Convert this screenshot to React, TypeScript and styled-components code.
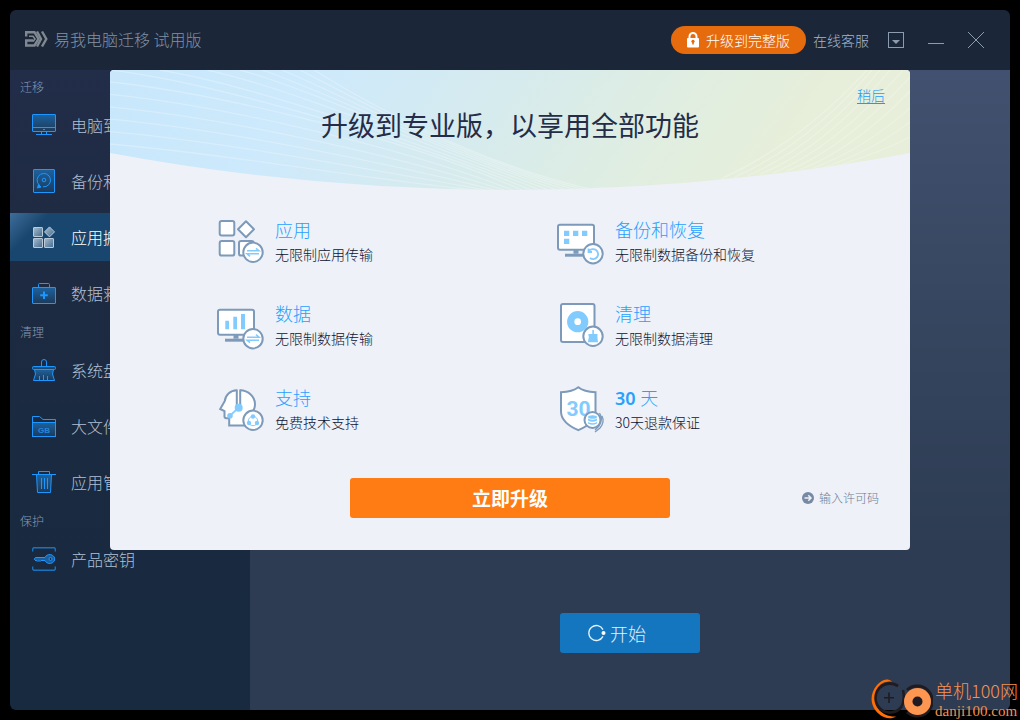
import React, { useId } from "react";
import styled, { createGlobalStyle } from "styled-components";

const GlobalStyle = createGlobalStyle`
  *, *::before, *::after { box-sizing: border-box; }
  body {
    margin: 0;
    background: #000;
    font-family: "Noto Sans CJK SC", "Noto Sans", sans-serif;
    font-weight: 300;
  }
  button { font: inherit; border: 0; cursor: pointer; }
  h1, h2, h3, p, ul { margin: 0; padding: 0; font-weight: inherit; }
  ul { list-style: none; }
  svg { display: block; flex: none; }
`;

const Page = styled.div`
  position: relative;
  display: flex;
  min-height: 100vh;
  padding: 10px;
  overflow: hidden;
`;

const AppWindow = styled.div`
  position: relative;
  flex: 1;
  display: flex;
  flex-direction: column;
  border-radius: 6px;
  overflow: hidden;
`;

const TitleBar = styled.header`
  display: flex;
  align-items: center;
  height: 60px;
  padding: 0 26px 0 15px;
  background: #1b2739;
`;

const Brand = styled.h1`
  flex: 1;
  display: flex;
  align-items: center;
  gap: 6px;
  padding-bottom: 2px;
  font-size: 16px;
  line-height: 24px;
  color: #8291a3;
`;

const UpgradePill = styled.button`
  display: flex;
  align-items: center;
  gap: 7px;
  height: 28px;
  padding: 0 16px;
  border-radius: 14px;
  background: #e66b0d;
  color: #fff;
  font-size: 14px;
  line-height: 24px;
`;

const ServiceLink = styled.a`
  margin: 0 19px 0 7px;
  color: #a3b6cf;
  font-size: 14px;
  line-height: 24px;
  text-decoration: none;
`;

const WindowButtons = styled.div`
  display: flex;
  gap: 24px;
`;

const WindowButton = styled.button`
  width: 16px;
  height: 16px;
  padding: 0;
  background: none;
  color: #8b9bb0;
`;

const Body = styled.div`
  flex: 1;
  display: flex;
`;

const Sidebar = styled.nav`
  width: 240px;
  flex: none;
  padding-top: 2px;
  background: linear-gradient(#222d49, #1e2b42 25%, #1a2a40 60%, #182a40);
`;

const SectionTitle = styled.h2`
  height: 29px;
  padding-left: 10px;
  font-size: 12px;
  line-height: 30px;
  color: #8799b4;
`;

const NavList = styled.ul`
  display: grid;
  gap: 8px;
`;

const NavItem = styled.button<{ $active?: boolean }>`
  display: flex;
  align-items: center;
  gap: 15px;
  width: 100%;
  height: 48px;
  padding: 0 22px;
  font-size: 16px;
  line-height: 24px;
  color: ${(p) => (p.$active ? "#ffffff" : "#b0c0d6")};
  background: ${(p) =>
    p.$active ? "linear-gradient(135deg, #3f6d9b, #18466e 14%, #18466e)" : "none"};
`;

const Main = styled.main`
  flex: 1;
  display: flex;
  align-items: flex-end;
  justify-content: center;
  padding-bottom: 57px;
  background: linear-gradient(#42516f, #34445d 45%, #2d3c52 75%, #2d3c52);
`;

const StartButton = styled.button`
  display: flex;
  align-items: center;
  gap: 4px;
  width: 140px;
  height: 40px;
  padding: 0 28px;
  border-radius: 3px;
  background: #1576c0;
  color: #e4f1fb;
  font-size: 18px;
  line-height: 24px;
`;

const Overlay = styled.div`
  position: absolute;
  inset: 60px 0 0;
  display: flex;
  align-items: flex-start;
  justify-content: center;
`;

const Dialog = styled.section`
  position: relative;
  width: min(800px, 100% - 32px);
  padding-bottom: 32px;
  border-radius: 4px;
  overflow: hidden;
  background: #eef1f7;
`;

const Banner = styled.div`
  position: relative;
  display: flex;
  align-items: center;
  justify-content: center;
  height: 120px;
  padding-bottom: 10px;
`;

const BannerArt = styled.svg`
  position: absolute;
  inset: 0;
  width: 100%;
  height: 100%;
`;

const DialogTitle = styled.h2`
  position: relative;
  font-size: 27px;
  line-height: 40px;
  font-weight: 400;
  color: #252c47;
`;

const LaterLink = styled.a`
  position: absolute;
  top: 13px;
  right: 25px;
  font-size: 14px;
  line-height: 24px;
  color: #1a9bff;
  text-underline-offset: 2px;
`;

const Features = styled.ul`
  display: grid;
  grid-template-columns: 1fr 1fr;
  gap: 36px 0;
  padding: 29px 14px 43px 106px;
`;

const Feature = styled.li`
  display: flex;
  gap: 11px;
`;

const FeatureTitle = styled.h3`
  font-family: "Noto Sans", "Noto Sans CJK SC", sans-serif;
  font-size: 18px;
  line-height: 22px;
  color: #27a0ff;

  b { font-weight: 600; }
`;

const FeatureText = styled.p`
  font-size: 14px;
  line-height: 26px;
  color: #0c1330;
`;

const DialogFooter = styled.footer`
  display: grid;
  grid-template-columns: 1fr 320px 1fr;
  align-items: center;
`;

const UpgradeButton = styled.button`
  grid-column: 2;
  height: 40px;
  border-radius: 3px;
  background: #ff7b14;
  color: #fff;
  font-size: 19px;
  line-height: 24px;
  font-weight: 700;
`;

const LicenseLink = styled.a`
  justify-self: end;
  display: flex;
  align-items: center;
  gap: 5px;
  margin-right: 31px;
  color: #6b7d98;
  font-size: 12px;
  line-height: 20px;
  text-decoration: none;
`;

const Watermark = styled.div`
  position: absolute;
  right: 2px;
  bottom: 0;
  display: flex;
  align-items: center;
  gap: 2px;
  color: #f79150;
`;

const WatermarkText = styled.div`
  display: grid;
  gap: 3px;
`;

const WatermarkName = styled.div`
  font-size: 18px;
  line-height: 20px;
`;

const WatermarkSite = styled.div`
  font-family: "Liberation Serif", serif;
  font-size: 15px;
  line-height: 16px;
  font-weight: 400;
`;

type NavIconName =
  | "monitor" | "disk" | "apps" | "case" | "brush" | "folder" | "trash" | "key";

const navShapes: Record<NavIconName, (fill: string) => React.ReactNode> = {
  monitor: (f) => (
    <>
      <rect x="0.5" y="1.5" width="23" height="17" rx="0.5" fill={f} />
      <path d="M0.5 14.5H23.5M11 16.5h2M9.5 18.5v3M14.5 18.5v3M4 21.5H20" />
    </>
  ),
  disk: (f) => (
    <>
      <rect x="1.5" y="0.5" width="21" height="23" rx="0.5" fill={f} />
      <path d="M7.4 16.2A6.7 6.7 0 1 1 11 17.8" />
      <circle cx="12" cy="11" r="1.8" />
      <path d="M5.5 19l1-3.500L9 18z" fill="#1c97ff" />
    </>
  ),
  apps: (f) => (
    <g stroke="#b9cadb">
      <rect x="1.5" y="2.5" width="9" height="9" rx="0.5" fill={f} />
      <rect x="1.5" y="13.5" width="9" height="9" rx="0.5" fill={f} />
      <rect x="12.5" y="13.5" width="9" height="9" rx="0.5" fill={f} />
      <path d="M17.5 1.9L22.5 6.9L17.5 11.9L12.5 6.9Z" fill={f} strokeLinejoin="round" />
    </g>
  ),
  case: (f) => (
    <>
      <path d="M6.5 6V3.5q0-1 1-1h9q1 0 1 1V6" />
      <rect x="0.5" y="6.5" width="23" height="16" rx="0.5" fill={f} />
      <path d="M12 10.5v7.5M8.2 14.3h7.6" strokeWidth="2" />
    </>
  ),
  brush: (f) => (
    <>
      <path d="M9.5 8V4a2.5 2.5 0 0 1 5 0v4" />
      <path d="M2.5 11.5L3.5 16L1.5 22.5H22.5L20.5 16L21.5 11.5Z" fill={f} />
      <rect x="0.5" y="8.5" width="23" height="3" rx="1" fill={f} />
      <path d="M7.5 18v4M11.5 17v5M15.5 18v4" />
    </>
  ),
  folder: (f) => (
    <>
      <path d="M0.5 8.5V2.5H7.5L11 5.5H23.5V8.5" />
      <rect x="0.5" y="8.5" width="23" height="14" fill={f} />
      <text x="12" y="19" textAnchor="middle" fontFamily="Liberation Sans" fontSize="8" fontWeight="700" fill="#2386dc" stroke="none">GB</text>
    </>
  ),
  trash: (f) => (
    <>
      <path d="M4.5 4.5L5.5 22.5H18.5L19.5 4.5Z" fill={f} />
      <path d="M0 4.5H24M6.5 4V1.5h11V4M9.5 8v11M12.5 8v11M15.5 8v11" />
    </>
  ),
  key: () => (
    <>
      <path d="M0.7 4.5V1.7l1-1h20.600l1 1V4.500M0.7 19.500v2.800l1 1h20.600l1-1v-2.800" stroke="#1a72bd" strokeWidth="1.400" />
      <path d="M3.5 10.5H13a5 4.5 0 1 1 0 3H9l-1 1-1-1-1 1-1-1-1 .5-1.8-1.800z" fill="#1b5f9e" />
      <circle cx="18.500" cy="12" r="1.500" fill="#19304a" />
    </>
  ),
};

function NavIcon({ name, active }: { name: NavIconName; active?: boolean }) {
  const id = useId();
  return (
    <svg width="24" height="24" viewBox="0 0 24 24" fill="none" stroke="#1c97ff" aria-hidden="true">
      <defs>
        <linearGradient id={id} x1="0" y1="0" x2={active ? "1" : "0"} y2="1">
          <stop offset="0" stopColor={active ? "#a9bccd" : "#1d629f"} />
          <stop offset="1" stopColor={active ? "#436b8e" : "#1c3a5a"} />
        </linearGradient>
      </defs>
      {navShapes[name](`url(#${id})`)}
    </svg>
  );
}

const OUTLINE = "#7d9aba";
const ACCENT = "#82cbff";

const TransferMark = ({ y }: { y: number }) => (
  <>
    <circle cx="37" cy={y} r="9.7" fill="#fff" />
    <path d={`M31 ${y - 1.5}H43L40 ${y - 4}M43 ${y + 1.5}H31L34 ${y + 4}`} stroke={ACCENT} strokeWidth="1.5" />
  </>
);

const Screen = ({ y }: { y: number }) => (
  <>
    <rect x="2" y={y} width="36" height="25" rx="2" fill="#fff" />
    <path d={`M20 ${y + 25}v4`} strokeWidth="5" />
    <path d={`M9 ${y + 30.5}H31`} strokeWidth="3" />
  </>
);

type FeatureIconName = "apps" | "backup" | "data" | "clean" | "support" | "guarantee";

const featureShapes: Record<FeatureIconName, React.ReactNode> = {
  apps: (
    <>
      <rect x="3.7" y="2" width="14.6" height="14.6" rx="2" fill="#fff" />
      <rect x="3.7" y="22" width="14.6" height="14.6" rx="2" fill="#fff" />
      <rect x="23" y="22" width="14.6" height="14.6" rx="2" fill="#fff" />
      <path d="M30 2.2L38 10.2L30 18.2L22 10.2Z" fill="#fff" strokeLinejoin="round" />
      <TransferMark y={33.3} />
    </>
  ),
  backup: (
    <>
      <Screen y={5.7} />
      <path d="M8 11.7h5.3v5.3H8zM17 11.7h5.3v5.3H17zM26 11.7h5.3v5.3H26zM8 19.7h5.3v5.3H8z" fill={ACCENT} stroke="none" />
      <circle cx="37" cy="34.7" r="9.7" fill="#fff" />
      <path d="M33 32.2A5 5 0 1 1 34 39M32.5 29.5V33H36" stroke={ACCENT} strokeWidth="1.8" />
    </>
  ),
  data: (
    <>
      <Screen y={6.7} />
      <path d="M9.3 17.7H13V26.3H9.3zM17.3 13.7H21V26.3H17.3zM25 11H29V26.3H25z" fill={ACCENT} stroke="none" />
      <TransferMark y={35.7} />
    </>
  ),
  clean: (
    <>
      <rect x="5" y="1" width="33.5" height="38" rx="2" fill="#fff" />
      <circle cx="21.7" cy="18.7" r="7" stroke={ACCENT} strokeWidth="7.3" />
      <circle cx="37" cy="33.3" r="9.7" fill="#fff" />
      <path d="M36.3 27h1.6v4H41.5v2.6H32.5V31H36.3zM33 33.6H41.3L42 39.2H31.8z" fill={ACCENT} stroke="none" />
    </>
  ),
  support: (
    <>
      <path d="M20.8 3.3C14 3.5 9.5 8 8.8 14L4.2 22L8.5 24.2V29.5Q8.5 31.3 10.5 31.3H13.2V38.5H34V28Q39 23 39 17.5C39 9.5 32.5 3.5 24 3.3" fill="#fff" />
      <path d="M20.8 2.5V19M24.2 2.5V19" />
      <path d="M22.7 20.7L14 28.7" stroke={ACCENT} strokeWidth="1.8" />
      <circle cx="22.7" cy="20.7" r="4" fill={ACCENT} stroke="none" />
      <circle cx="14" cy="28.7" r="2.8" fill={ACCENT} stroke="none" />
      <circle cx="37" cy="33.3" r="9.7" fill="#fff" />
      <circle cx="37" cy="34" r="4.7" stroke={ACCENT} strokeWidth="1" />
      <g fill={ACCENT} stroke="none">
        <circle cx="37" cy="29.5" r="2.2" />
        <circle cx="33" cy="36" r="2.2" />
        <circle cx="41" cy="36" r="2.2" />
      </g>
    </>
  ),
  guarantee: (
    <>
      <path d="M22.3 0.3Q28 4.8 39.5 5.3V25Q39 36 22.3 43.2Q5.6 36 5 25V5.3Q16.6 4.8 22.3 0.3Z" fill="#fff" />
      <text x="22.5" y="29" textAnchor="middle" fontFamily="Roboto" fontSize="21" fontWeight="700" fill={ACCENT} stroke="none">30</text>
      <path d="M43.5 26q4 6-.5 13l-4 4M46 29q3 6-2 12l-5 4" strokeWidth="1.3" />
      <circle cx="36.5" cy="33" r="8" fill="#fff" />
      <g fill={ACCENT} stroke="none">
        <ellipse cx="36.5" cy="30" rx="4.5" ry="1.8" />
        <path d="M32 31.5q4.5 2.5 9 0v2q-4.5 2.5-9 0zM32 35q4.5 2.5 9 0v1.5q-4.5 2.5-9 0z" />
      </g>
    </>
  ),
};

const FeatureIcon = ({ name }: { name: FeatureIconName }) => (
  <svg width="48" height="48" viewBox="0 0 48 48" fill="none" stroke={OUTLINE} strokeWidth="2" overflow="visible" aria-hidden="true">
    {featureShapes[name]}
  </svg>
);

const topStarts = [0, 50, 97, 130, 152, 172, 190, 204];

const leftWaves = Array.from({ length: 14 }, (_, k) => {
  const fromTop = k >= 6;
  const x = fromTop ? topStarts[k - 6] : 0;
  const y = fromTop ? 0 : 74 - 12.4 * k;
  const c1x = x + 120 - k * 5;
  const c1y = y + 10 + (fromTop ? (k - 6) * 3.5 : 0);
  const c2x = k <= 5 ? 260 + k * 4 : 280 + (k - 5) * 11;
  const c2y = k <= 5 ? 110 - k * 9.6 : 62 + (k - 5) * 4;
  return `M${x} ${y}C${c1x} ${c1y} ${c2x} ${c2y} ${367 + k * 9} 120`;
});

const rightEnds = [[757, 0], [762, 0], [770, 0], [780, 0], [793, 0], [800, 7], [800, 21], [800, 38], [800, 52], [800, 67]];

const rightWaves = rightEnds.map(
  ([x, y], i) => `M${611 + i * 13} ${109 - i * 1.5}Q${690 + i * 9} ${73 + i} ${x} ${y}`
);

const BannerPicture = () => (
  <BannerArt viewBox="0 0 800 120" preserveAspectRatio="none" aria-hidden="true">
    <defs>
      <linearGradient id="sky" x1="0" y1="0" x2="1" y2="0.1">
        <stop offset="0" stopColor="#c8e7fb" />
        <stop offset="0.25" stopColor="#cde9fc" />
        <stop offset="0.5" stopColor="#d6ebee" />
        <stop offset="0.75" stopColor="#e1eee0" />
        <stop offset="0.9" stopColor="#e7eeda" />
        <stop offset="1" stopColor="#e7eed9" />
      </linearGradient>
      <clipPath id="bowl">
        <path d="M0 0H800V83Q400 157 0 83Z" />
      </clipPath>
    </defs>
    <g clipPath="url(#bowl)" fill="none" stroke="#fff" strokeOpacity="0.25" strokeWidth="1.3">
      <rect width="800" height="120" fill="url(#sky)" stroke="none" />
      {leftWaves.map((d) => <path key={d} d={d} />)}
      {rightWaves.map((d) => <path key={d} d={d} />)}
    </g>
  </BannerArt>
);

const sections: { title: string; items: { icon: NavIconName; label: string; active?: boolean }[] }[] = [
  {
    title: "迁移",
    items: [
      { icon: "monitor", label: "电脑到电脑" },
      { icon: "disk", label: "备份和恢复" },
      { icon: "apps", label: "应用搬家", active: true },
      { icon: "case", label: "数据救援" },
    ],
  },
  {
    title: "清理",
    items: [
      { icon: "brush", label: "系统盘清理" },
      { icon: "folder", label: "大文件清理" },
      { icon: "trash", label: "应用管理" },
    ],
  },
  { title: "保护", items: [{ icon: "key", label: "产品密钥" }] },
];

const features: { icon: FeatureIconName; title: React.ReactNode; text: string }[] = [
  { icon: "apps", title: "应用", text: "无限制应用传输" },
  { icon: "backup", title: "备份和恢复", text: "无限制数据备份和恢复" },
  { icon: "data", title: "数据", text: "无限制数据传输" },
  { icon: "clean", title: "清理", text: "无限制数据清理" },
  { icon: "support", title: "支持", text: "免费技术支持" },
  { icon: "guarantee", title: <><b>30</b> 天</>, text: "30天退款保证" },
];

export default function App() {
  return (
    <Page>
      <GlobalStyle />
      <AppWindow>
        <TitleBar>
          <Brand>
            <svg width="23" height="16" viewBox="0 0 23 16" fill="none" stroke="#7f8790" strokeWidth="2.4" aria-hidden="true">
              <path d="M1.200 5.500V1.300H9.500L13.500 8L9.500 14.500H1.200V9.500H8" />
              <path d="M4 5.300H8L10 8L8 10.500" strokeWidth="1.600" />
              <path d="M12 0.500L16 8L12 15.500M17 0.500L21.300 8L17 15.500" />
            </svg>
            易我电脑迁移 试用版
          </Brand>
          <UpgradePill type="button">
            <svg width="12" height="16" viewBox="0 0 12 16" fill="none" aria-hidden="true">
              <path d="M2.5 7V4.5a3.5 3.5 0 0 1 7 0V7" stroke="#fff" strokeWidth="2" />
              <rect y="6" width="12" height="9.5" rx="1" fill="#fff" />
              <path d="M6 8.5v4" stroke="#e66b0d" strokeWidth="1.6" />
              <circle cx="6" cy="9.3" r="1.6" fill="#e66b0d" />
            </svg>
            升级到完整版
          </UpgradePill>
          <ServiceLink href="#service">在线客服</ServiceLink>
          <WindowButtons>
            <WindowButton type="button" aria-label="菜单">
              <svg width="16" height="16" viewBox="0 0 16 16" fill="none" stroke="currentColor">
                <rect x="0.5" y="0.5" width="15" height="15" />
                <path d="M4 8h8l-4 4z" fill="currentColor" stroke="none" />
              </svg>
            </WindowButton>
            <WindowButton type="button" aria-label="最小化">
              <svg width="16" height="16" viewBox="0 0 16 16" stroke="currentColor">
                <path d="M0 11.5H16" />
              </svg>
            </WindowButton>
            <WindowButton type="button" aria-label="关闭">
              <svg width="16" height="16" viewBox="0 0 16 16" stroke="currentColor">
                <path d="M0 0L16 16M16 0L0 16" />
              </svg>
            </WindowButton>
          </WindowButtons>
        </TitleBar>

        <Body>
          <Sidebar>
            {sections.map((section) => (
              <React.Fragment key={section.title}>
                <SectionTitle>{section.title}</SectionTitle>
                <NavList>
                  {section.items.map((item) => (
                    <li key={item.label}>
                      <NavItem type="button" $active={item.active}>
                        <NavIcon name={item.icon} active={item.active} />
                        {item.label}
                      </NavItem>
                    </li>
                  ))}
                </NavList>
              </React.Fragment>
            ))}
          </Sidebar>
          <Main>
            <StartButton type="button">
              <svg width="18" height="18" viewBox="0 0 18 18" fill="none" stroke="#e4f1fb" aria-hidden="true">
                <path d="M15 5.6A7.5 7.5 0 1 0 15 12.400" strokeWidth="1.3" />
                <circle cx="15.5" cy="9" r="2" fill="#fff" stroke="none" />
              </svg>
              开始
            </StartButton>
          </Main>
        </Body>

        <Overlay>
          <Dialog role="dialog" aria-labelledby="upgrade-title">
            <Banner>
              <BannerPicture />
              <DialogTitle id="upgrade-title">升级到专业版，以享用全部功能</DialogTitle>
              <LaterLink href="#later">稍后</LaterLink>
            </Banner>
            <Features>
              {features.map((feature) => (
                <Feature key={feature.icon}>
                  <FeatureIcon name={feature.icon} />
                  <div>
                    <FeatureTitle>{feature.title}</FeatureTitle>
                    <FeatureText>{feature.text}</FeatureText>
                  </div>
                </Feature>
              ))}
            </Features>
            <DialogFooter>
              <UpgradeButton type="button">立即升级</UpgradeButton>
              <LicenseLink href="#license">
                <svg width="12" height="12" viewBox="0 0 12 12" fill="none" stroke="#eef1f7" strokeWidth="1.5" aria-hidden="true">
                  <circle cx="6" cy="6" r="6" fill="#7889a3" stroke="none" />
                  <path d="M2.5 6H9M6.3 3.2L9 6L6.3 8.8" />
                </svg>
                输入许可码
              </LicenseLink>
            </DialogFooter>
          </Dialog>
        </Overlay>
      </AppWindow>

      <Watermark>
        <svg width="62" height="42" viewBox="0 0 62 42" fill="none" aria-hidden="true">
          <path d="M27 8A14.5 14.5 0 1 0 31 28" stroke="#1f1b20" strokeWidth="2.8" />
          <path d="M18 14.5V25M13 19.7H23" stroke="#1f1b20" strokeWidth="1.6" />
          <path d="M21 3.5C15 -1 10 3 6 7C-2 16 -1 29 8 36C12 40 20 42 25 38.5C18 39 12 36 8 32C1 25 2 13 9 7C13 3.5 17 3.5 21 3.5Z" fill="#ff6f05" />
          <path d="M32 12Q34 20 31 28" stroke="#1f1b20" strokeWidth="2.5" />
          <path d="M36 12A15 15 0 1 1 36 34" stroke="#1f1b20" strokeWidth="3" />
          <circle cx="46.5" cy="23.5" r="13.5" fill="#fc9650" />
          <circle cx="46.5" cy="23.5" r="5" fill="#1f1b20" />
        </svg>
        <WatermarkText>
          <WatermarkName>单机100网</WatermarkName>
          <WatermarkSite>danji100.com</WatermarkSite>
        </WatermarkText>
      </Watermark>
    </Page>
  );
}
